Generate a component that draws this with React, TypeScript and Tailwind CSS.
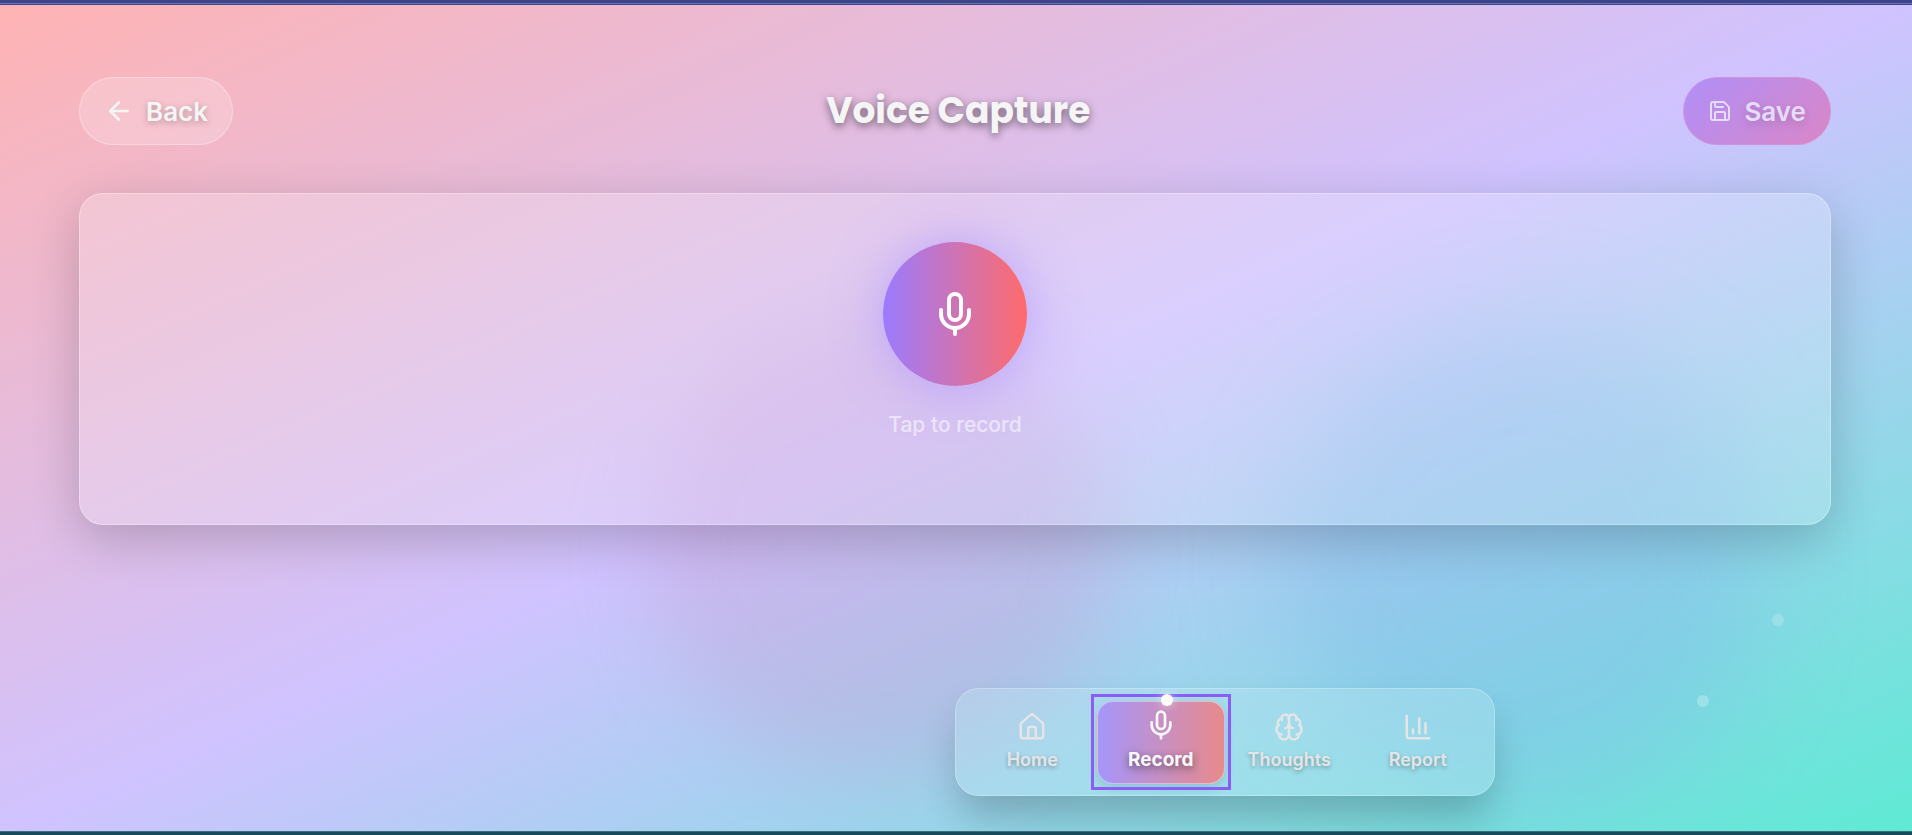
import { ArrowLeft, Brain, ChartColumn, House, Mic, Save } from 'lucide-react';

const NAV_ITEMS = [
  { label: 'Home', icon: House },
  { label: 'Record', icon: Mic },
  { label: 'Thoughts', icon: Brain },
  { label: 'Report', icon: ChartColumn },
];

const ACTIVE = 'Record';

function Backdrop() {
  return (
    <div className="absolute inset-0 -z-10 overflow-hidden bg-[linear-gradient(to_bottom_right,#ffb3b3_0%,#d0c3ff_50%,#a6d1f0_68%,#5eead4_100%)]">
      <div className="absolute left-[34%] top-[38%] size-[460px] rounded-full bg-[#c890c4]/25 blur-[40px]" />
      <div className="absolute left-[67%] top-[39%] size-[480px] rounded-full bg-[#7ab0ec]/30 blur-[50px]" />
      <span className="absolute right-[128px] top-[614px] size-3 rounded-full bg-white/20" />
      <span className="absolute right-[203px] top-[695px] size-3 rounded-full bg-white/25" />
    </div>
  );
}

function Header() {
  return (
    <header className="flex items-center justify-between">
      <button className="flex h-[68px] items-center gap-3 rounded-full border border-white/30 bg-white/20 px-6 text-[26px] font-semibold text-[#f5f5f5] [text-shadow:0_2px_6px_rgba(0,0,0,0.25)]">
        <ArrowLeft size={30} />
        Back
      </button>
      <h1 className="font-[Poppins,Inter,sans-serif] text-4xl font-bold text-[#f5f5f5] [text-shadow:0_3px_8px_rgba(0,0,0,0.5)]">
        Voice Capture
      </h1>
      <button className="flex h-[68px] items-center gap-3 rounded-full border border-[#e09ad8]/50 bg-linear-135/srgb from-[#b08ff8] to-[#da86c6] px-6 text-[26px] font-semibold text-[#e4dcf8] [text-shadow:0_3px_8px_rgba(0,0,0,0.15)]">
        <Save size={24} />
        Save
      </button>
    </header>
  );
}

function Recorder() {
  return (
    <main className="mt-12 flex min-h-[332px] flex-col items-center rounded-3xl border border-white/30 bg-white/20 pt-12 shadow-[0_14px_50px_rgba(0,0,0,0.2)]">
      <button
        aria-label="Start recording"
        className="grid size-36 place-items-center rounded-full bg-linear-to-r/srgb from-[#9b7bff] to-[#ff6b6b] text-white shadow-[0_0_50px_rgba(155,123,255,0.5)]"
      >
        <Mic size={48} />
      </button>
      <p className="mt-6 text-[21px] leading-[30px] font-medium text-white/55">Tap to record</p>
    </main>
  );
}

function BottomNav() {
  return (
    <nav className="ml-[50%] mt-auto flex w-[540px] rounded-3xl border border-white/25 bg-[#c8ecf4]/30 px-3 py-[11px] shadow-[0_25px_40px_-5px_rgba(0,0,0,0.22)]">
      {NAV_ITEMS.map(({ label, icon: Icon }) =>
        label === ACTIVE ? (
          <button
            key={label}
            aria-current="page"
            className="relative h-[84px] flex-1 pt-px outline-3 outline-offset-3 outline-[#8b5cf6]"
          >
            <span className="flex h-full flex-col items-center gap-[5px] rounded-2xl border border-white/40 bg-linear-to-r/srgb from-[#a596fa] to-[#e88a8c] pt-[7px] text-[19px] leading-7 font-bold text-[#f8f8f8] shadow-[0_4px_12px_rgba(0,0,0,0.12)] [text-shadow:0_3px_8px_rgba(0,0,0,0.5)]">
              <Icon size={32} />
              {label}
            </span>
            <span className="absolute -top-1.5 left-1/2 size-3 rounded-full bg-white shadow-[0_0_10px_rgba(255,255,255,0.6)]" />
          </button>
        ) : (
          <button
            key={label}
            className="flex h-[84px] flex-1 flex-col items-center gap-1 pt-3 text-lg font-semibold text-[#e5e5e5] [text-shadow:0_2px_4px_rgba(0,0,0,0.3)]"
          >
            <Icon size={30} />
            {label}
          </button>
        )
      )}
    </nav>
  );
}

export default function App() {
  return (
    <div className="relative isolate flex min-h-screen flex-col font-[Inter,sans-serif]">
      <Backdrop />
      <div className="h-1 border-b border-[#6c74b0] bg-[#3c448c]" />
      <div className="h-px bg-[#3c448c]" />
      <div className="flex grow flex-col pb-[35px] pl-[79px] pr-[81px] pt-[72px]">
        <Header />
        <Recorder />
        <BottomNav />
      </div>
      <div className="h-1 border-t border-[#3a6e7c] bg-[#174a5a]" />
    </div>
  );
}
